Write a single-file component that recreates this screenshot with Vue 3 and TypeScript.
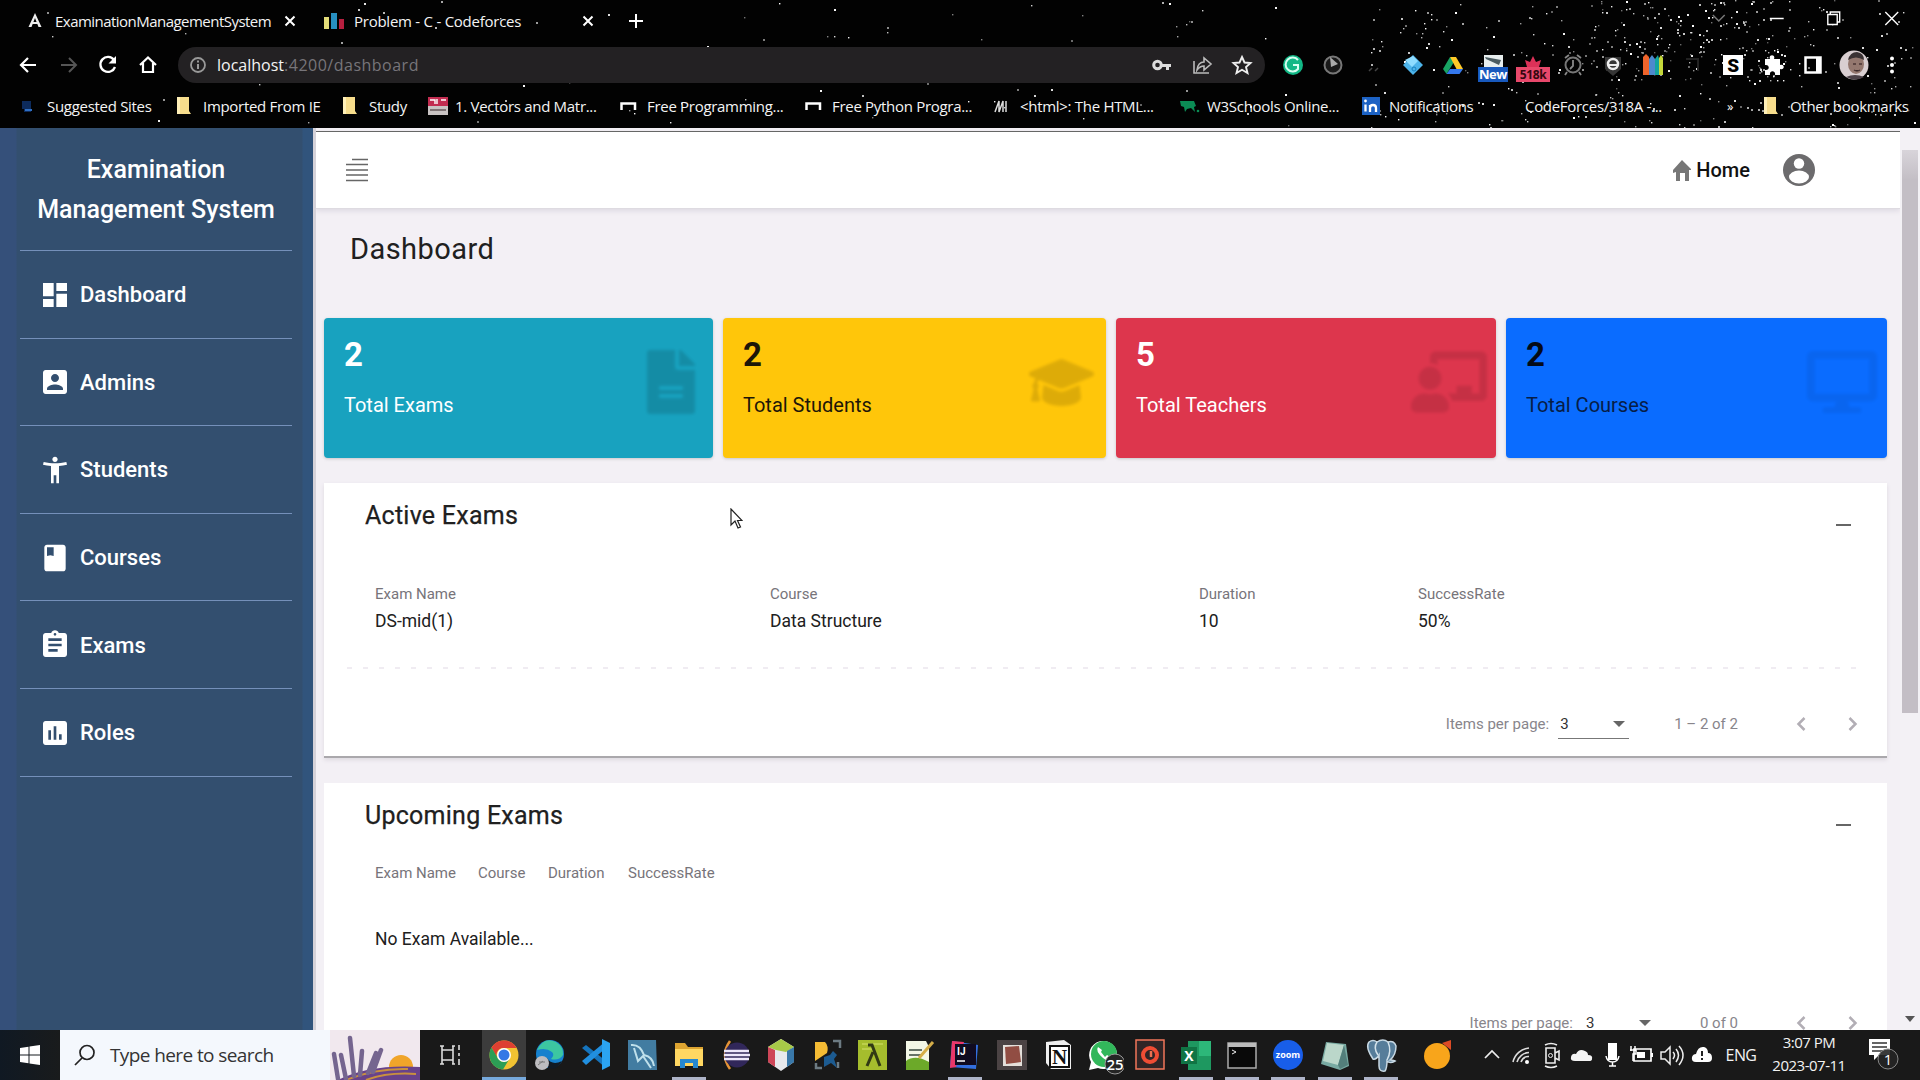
<script setup lang="ts">
interface Star { x: number; y: number; s: number; o: number }
interface Bookmark { label: string; width: number; icon: string }

function random(seed: number): () => number {
  let a = seed
  return () => {
    a = (a * 1664525 + 1013904223) % 4294967296
    return a / 4294967296
  }
}

const rnd = random(77)
const stars: Star[] = []
function scatter(count: number, x0: number, x1: number, y0: number, y1: number): void {
  for (let i = 0; i < count; i++) {
    stars.push({
      x: Math.round(x0 + rnd() * (x1 - x0)),
      y: Math.round(y0 + rnd() * (y1 - y0)),
      s: rnd() > 0.55 ? 2 : 1.4,
      o: 0.35 + rnd() * 0.65,
    })
  }
}
scatter(34, 20, 640, 0, 127)
scatter(60, 640, 1300, 0, 127)
scatter(300, 1370, 1915, 0, 127)
scatter(160, 1590, 1790, 0, 80)

const bookmarks: Bookmark[] = [
  { label: 'Suggested Sites', width: 156, icon: 'site' },
  { label: 'Imported From IE', width: 166, icon: 'folder' },
  { label: 'Study', width: 86, icon: 'folder' },
  { label: '1. Vectors and Matr...', width: 192, icon: 'mit' },
  { label: 'Free Programming...', width: 185, icon: 'bracket' },
  { label: 'Free Python Progra...', width: 188, icon: 'bracket' },
  { label: '<html>: The HTML...', width: 187, icon: 'mdn' },
  { label: 'W3Schools Online...', width: 182, icon: 'w3' },
  { label: 'Notifications', width: 136, icon: 'linkedin' },
  { label: 'CodeForces/318A -...', width: 229, icon: 'none' },
]

const bookmarkIcons: Record<string, string> = {
  none: '',
  site: '<path d="M2 4h9v11H4v-3H2z" fill="#0d2b5c"/><path d="M5 13h7" stroke="#2f6fc4" stroke-width="2"/>',
  folder: '<path d="M1 0h12v14l2 3H1z" fill="#f7dd8c"/><path d="M1 0h3v17H1z" fill="#fff0b8"/>',
  mit: '<path d="M0 0h20v9H0z" fill="#c22c50"/><path d="M2 3h5v4M9 2v5M13 3h5" stroke="#fff" stroke-width="1.4" fill="none"/><path d="M0 9h20v9H0z" fill="#c9c3c3"/><path d="M2 13h16" stroke="#7e7374" stroke-width="2"/>',
  bracket: '<path d="M1.500 13V6.500H15V13" fill="none" stroke="#fff" stroke-width="2.500"/>',
  mdn: '<path d="M2 15 6 4v11L10 4v11M13 4v11" fill="none" stroke="#ddd" stroke-width="1.500"/>',
  w3: '<path d="M0 4h14l2 5-2 1 1 5-4-4-4 1-2 3-1-5-3-1z" fill="#0b8c55"/><circle cx="18" cy="14" r="1.300" fill="#0b8c55"/>',
  linkedin: '<path d="M0 0h18v18H0z" fill="#1c62c4"/><path d="M3.500 7.500v7M8 15V8m0 3c0-4 6-4 6 0v4" stroke="#fff" stroke-width="2.300" fill="none"/><circle cx="3.500" cy="4" r="1.400" fill="#fff"/>',
}

const extensions: string[] = [
  '<circle cx="20" cy="20" r="10" fill="#12b886"/><path d="M25 15a7 7 0 1 0 0 9v-4h-5" fill="none" stroke="#d6fff1" stroke-width="2"/>',
  '<circle cx="20" cy="20" r="8.500" fill="#191919" stroke="#777" stroke-width="2"/><path d="m17 12 8 7-7 3z" fill="#aaa"/>',
  '<path d="M16 26l3-3m3 3 3-3" stroke="#444" stroke-width="1.500"/>',
  '<path d="m20 10 10 10-10 10-10-10z" fill="#4db4ea"/><path d="m12 15 8-4 5 5-6 6z" fill="#8edcff"/><circle cx="21" cy="24" r="2" fill="none" stroke="#1780be"/>',
  '<path d="m17 12-7 12 3.500 5L21 17z" fill="#18a463"/><path d="M17 12h6l7 12h-6.500z" fill="#ffca28"/><path d="M13.500 29 17 24h13l-3.500 5z" fill="#3478ee"/>',
  '<path d="M11 10h19v12H11z" fill="#e7eeee"/><path d="m12 12 16 3-2 5-13-6z" fill="#4a5b60"/><path d="M5 22h30v15H5z" fill="#1859bd"/><text x="20" y="34" text-anchor="middle" font-family="Open Sans, sans-serif" font-size="13" font-weight="700" fill="#fff">New</text>',
  '<path d="M12 15l5 2 3-6 3 6 5-2-2 7H14z" fill="#dc3158"/><path d="M3 22h34v15H3z" fill="#e8486b"/><text x="20" y="34" text-anchor="middle" font-family="Open Sans, sans-serif" font-size="12" font-weight="700" fill="#34070f">518k</text>',
  '<circle cx="20" cy="20" r="7.500" fill="none" stroke="#777" stroke-width="2"/><path d="M20 15v6l-3 3M12 13l4-3m12 3-4-3M14 27l-2 3m14-3 2 3" fill="none" stroke="#888" stroke-width="1.800"/>',
  '<path d="M12 12h16v12l-8 7-8-7z" fill="#363636"/><circle cx="20" cy="19" r="5" fill="none" stroke="#eee" stroke-width="2.500"/><path d="M16 20h8" stroke="#eee" stroke-width="2"/>',
  '<path d="M10 12l3-3 3 3v18h-6z" fill="#ee642b"/><path d="M16 14l3-4 3 4v16h-6z" fill="#4d89cd"/><path d="M22 14l3-4 1 4v16h-4z" fill="#14a49d"/><path d="M26 13l2-3 2 3v17h-4z" fill="#c4d83a"/>',
  '<path d="M13 14h12v12" fill="none" stroke="#222" stroke-width="2"/>',
  '<path d="M10 10h20v20H10z" fill="#fff"/><text x="20" y="27" text-anchor="middle" font-family="Roboto, sans-serif" font-size="19" font-weight="900" fill="#000">S</text>',
  '<path d="M12 14h5c-2-5 6-5 4 0h6v6c5-2 5 6 0 4v6h-5c1-5-6-5-5 0h-5v-5c5 1 5-6 0-5z" fill="#fff"/>',
  '<path d="M12.500 12.500h15v15h-15z" fill="none" stroke="#fff" stroke-width="2.500"/><path d="M23 12h5v16h-5z" fill="#fff"/>',
  '<circle cx="21" cy="20" r="14.500" fill="#d9cfd1"/><ellipse cx="23" cy="19" rx="8" ry="10" fill="#94786f"/><path d="M15 15q2-8 9-8 7 1 7 8-8-5-16 0z" fill="#3a3233"/><path d="M20 19h3m3 0h3M21 25q3 2 6 0" stroke="#493534" stroke-width="1.300"/><path d="M13 32q9-4 18 0-8 5-18 0z" fill="#4b4147"/>',
  '<circle cx="19" cy="13.500" r="2" fill="#fff"/><circle cx="19" cy="20" r="2" fill="#fff"/><circle cx="19" cy="26.500" r="2" fill="#fff"/>',
]

const menu = [
  { label: 'Dashboard', d: 'M3 13h8V3H3v10zm0 8h8v-6H3v6zm10 0h8V11h-8v10zm0-18v6h8V3h-8z' },
  { label: 'Admins', d: 'M3 5v14c0 1.100.890 2 2 2h14c1.100 0 2-.900 2-2V5c0-1.100-.900-2-2-2H5c-1.110 0-2 .900-2 2zm12 4c0 1.660-1.340 3-3 3s-3-1.340-3-3 1.340-3 3-3 3 1.340 3 3zm-9 8c0-2 4-3.100 6-3.100s6 1.100 6 3.100v1H6v-1z' },
  { label: 'Students', d: 'M20.500 6c-2.610.700-5.670 1-8.500 1s-5.890-.300-8.500-1L3 8c1.860.500 4 .830 6 1v13h2v-6h2v6h2V9c2-.170 4.140-.500 6-1l-.500-2zM12 6c1.100 0 2-.900 2-2s-.900-2-2-2-2 .900-2 2 .900 2 2 2z' },
  { label: 'Courses', d: 'M18 2H6c-1.100 0-2 .900-2 2v16c0 1.100.900 2 2 2h12c1.100 0 2-.900 2-2V4c0-1.100-.900-2-2-2zM6 4h5v6.500l-2.500-.500L6 10.500V4z' },
  { label: 'Exams', d: 'M19 3h-4.180C14.400 1.840 13.300 1 12 1c-1.300 0-2.400.840-2.820 2H5c-1.100 0-2 .900-2 2v14c0 1.100.900 2 2 2h14c1.100 0 2-.900 2-2V5c0-1.100-.900-2-2-2zm-7 0c.550 0 1 .450 1 1s-.450 1-1 1-1-.450-1-1 .450-1 1-1zm2 14H7v-2h7v2zm3-4H7v-2h10v2zm0-4H7V7h10v2z' },
  { label: 'Roles', d: 'M19 3H5c-1.100 0-2 .900-2 2v14c0 1.100.900 2 2 2h14c1.100 0 2-.900 2-2V5c0-1.100-.900-2-2-2zM9 17H7v-7h2v7zm4 0h-2V7h2v10zm4 0h-2v-4h2v4z' },
]

const cards = [
  { value: 2, label: 'Total Exams', tone: 'teal', box: '0 0 384 512', w: 48, d: 'M224 136V0H24C11 0 0 11 0 24v464c0 13 11 24 24 24h336c13 0 24-11 24-24V160H248c-13 0-24-11-24-24zm64 236c0 7-5 12-12 12H108c-7 0-12-5-12-12v-8c0-7 5-12 12-12h168c7 0 12 5 12 12v8zm0-64c0 7-5 12-12 12H108c-7 0-12-5-12-12v-8c0-7 5-12 12-12h168c7 0 12 5 12 12v8zM384 122v6H256V0h6c6 0 12 3 17 7l98 98c4 5 7 11 7 17z' },
  { value: 2, label: 'Total Students', tone: 'yellow', box: '0 0 640 512', w: 65, d: 'M622 153 343 37c-15-6-31-6-46 0L18 153c-24 9-24 39 0 48l49 20c-11 13-17 30-18 47-10 6-17 16-17 28 0 11 6 20 14 26L20 430c-2 9 5 18 15 18h58c10 0 17-9 15-18L82 322c8-6 14-15 14-26 0-12-7-21-16-27 1-15 8-23 21-32l196 80c9 3 27 7 46 0l279-116c24-9 24-39 0-48zM353 345c-30 11-57 4-66 0l-145-59-14 123c0 45 86 84 192 84s192-39 192-84l-14-123-145 59z' },
  { value: 5, label: 'Total Teachers', tone: 'red', box: '0 0 640 512', w: 76, d: 'M208 352c-2 0-5 0-7 1a130 130 0 0 1-82 0c-2-1-5-1-7-1C50 352 0 402 0 464c0 27 22 48 48 48h224c26 0 48-21 48-48 0-62-50-112-112-112zm-48-32a96 96 0 1 0 0-192 96 96 0 0 0 0 192zM592 0H208c-26 0-48 22-48 49v47c24 0 45 7 64 18V64h352v288h-64v-64H384v64h-77c20 16 34 39 41 64h244c26 0 48-22 48-49V49c0-27-22-49-48-49z' },
  { value: 2, label: 'Total Courses', tone: 'blue', box: '0 0 576 512', w: 70, d: 'M528 0H48C22 0 0 22 0 48v320c0 27 22 48 48 48h192l-16 48h-72c-13 0-24 11-24 24s11 24 24 24h272c13 0 24-11 24-24s-11-24-24-24h-72l-16-48h192c27 0 48-21 48-48V48c0-26-21-48-48-48zm-16 352H64V64h448v288z' },
]

const taskApps: { icon: string; open?: boolean; focused?: boolean }[] = [
  { focused: true, icon: '<circle cx="20" cy="20" r="14.500" fill="#f1c232"/><path d="M20 5.500A14.500 14.500 0 0 0 7.500 12.500l6 11A7 7 0 0 1 20 13h12.600A14.500 14.500 0 0 0 20 5.500z" fill="#dd4032"/><path d="M7.500 12.500A14.500 14.500 0 0 0 19 34.500l6-10a7 7 0 0 1-11-1z" fill="#2c9e55"/><circle cx="20" cy="20" r="7" fill="#fff"/><circle cx="20" cy="20" r="5.500" fill="#3478e5"/>' },
  { icon: '<circle cx="20" cy="19" r="14" fill="#1681ce"/><path d="M7 15Q14 1 26 7q8 5 7 13-4 6-12 4 4-4 1-7-6-5-15-2z" fill="#3cc6a1"/><path d="M17 23q5 8 15 3-5 10-14 7z" fill="#111a24"/><circle cx="12" cy="28" r="7" fill="#bdbcbf"/><path d="M9 27h6m-7 3 5-4" stroke="#777"/>' },
  { icon: '<path d="m6 13 4-3 20 16v7z" fill="#1574bd"/><path d="m6 26 4 4 20-17V6z" fill="#218fdf"/><path d="m26 4 8 4v23l-8 4z" fill="#2ba4f2"/>' },
  { icon: '<path d="M6 5h28l1 30H6z" fill="#427ca1"/><path d="M9 10q9-1 13 10 9 2 10 11M12 13l4 13 5-5 8 12" fill="none" stroke="#bfe0eb" stroke-width="2"/>' },
  { open: true, icon: '<path d="M6 8h10l3 4h15v19H6z" fill="#dda431"/><path d="M6 14h28v17H6z" fill="#ffd762"/><path d="M11 33V24h18v9h-5v-5h-8v5z" fill="#2688cf"/>' },
  { icon: '<path d="M15 6Q5 20 15 34" fill="none" stroke="#e69437" stroke-width="2.500"/><circle cx="22" cy="20" r="12.500" fill="#31275a"/><path d="M9 16h25M9 20h26M9 24h25" stroke="#eee8fb" stroke-width="2.600"/>' },
  { icon: '<path d="m20 4 13 8v15l-13 9-13-9V12z" fill="#e7e9ed"/><path d="m20 4 13 8-8 5-10-2-8-3z" fill="#a7c948"/><path d="m7 12 7 3v17l-7-5z" fill="#ce4658"/><path d="m33 12-7 4v16l7-5z" fill="#3978a9"/>' },
  { icon: '<path d="M8 7h10q4 4 2 11L8 26z" fill="#f4bb34"/><path d="M26 6h7v7m-2 14v6M9 28v5h6" fill="none" stroke="#6d7b83" stroke-width="2.500"/><path d="m17 22 6-2 3-4 4 4-3 4 3 9-6-5-7 4z" fill="#1c5b91"/>' },
  { icon: '<path d="M5 5h29v30H5z" fill="#a5bd2d"/><path d="M9 9h21M9 14h10" stroke="#d3e16b"/><path d="M15 10h4l8 21M20 17l-6 14" fill="none" stroke="#313a14" stroke-width="3"/>' },
  { icon: '<path d="M7 6h20l3 6v23H7z" fill="#f3f7e6"/><path d="M10 15h13M10 20h12" stroke="#657367" stroke-width="2"/><path d="M7 26q9-7 23 1v8H7z" fill="#6ca929"/><path d="m20 23 14-16" stroke="#d5ae49" stroke-width="3"/>' },
  { open: true, icon: '<path d="m7 6 26 4-2 24-26-2z" fill="#336fe0"/><path d="m7 6 12 1-8 25-6 1z" fill="#ea3769"/><path d="M10 9h21v21H10z" fill="#100b20"/><text x="12" y="20" font-family="Roboto, sans-serif" font-size="10" font-weight="700" fill="#fff">IJ</text><path d="M12 26h8" stroke="#fff" stroke-width="1.500"/>' },
  { icon: '<path d="M5 5h30v30H5z" fill="#4b4344"/><path d="M11 10h19v21H11z" fill="#e4dfda"/><path d="m13 12 14-1 2 16-15 2z" fill="#914d43"/>' },
  { icon: '<path d="m8 7 18-2 7 5v24H13l-5-6z" fill="#eee"/><path d="M12 11h19v21H12z" fill="#fff" stroke="#111" stroke-width="2"/><text x="21.500" y="29" text-anchor="middle" font-family="Liberation Serif, serif" font-size="21" font-weight="700" fill="#111">N</text>' },
  { icon: '<path d="M5 35 7 27a14 14 0 1 1 7 6z" fill="#fff"/><circle cx="20" cy="19" r="13" fill="#32b75b"/><path d="M14 12q-3 4 5 11 7 6 9 0l-5-3-2 2-4-5 1-2z" fill="#fff"/><circle cx="31" cy="29" r="10" fill="#252525" stroke="#999"/><text x="31" y="35" text-anchor="middle" font-family="Open Sans, sans-serif" font-size="15" font-weight="600" fill="#fff">25</text>' },
  { icon: '<path d="M6 5h28v29H6z" fill="#302526" stroke="#f17659" stroke-width="1.500"/><circle cx="20" cy="20" r="7" fill="none" stroke="#ef4d34" stroke-width="4"/><path d="M21 16v6" stroke="#ee7051" stroke-width="2.500"/>' },
  { open: true, icon: '<path d="M12 6h23v29H12z" fill="#1e9860"/><path d="M23 6h12v15H23z" fill="#2db779"/><path d="M5 12h16v17H5z" fill="#107444"/><text x="13" y="26" text-anchor="middle" font-family="Open Sans, sans-serif" font-size="14" font-weight="700" fill="#fff">X</text>' },
  { open: true, icon: '<path d="M6 8h28v25H6z" fill="#090909" stroke="#aaa" stroke-width="1.500"/><path d="M6 8h28v4H6z" fill="#bbb"/><path d="m10 15 4 2-4 2" fill="none" stroke="#eee"/>' },
  { open: true, icon: '<circle cx="20" cy="20" r="15" fill="#185ee9"/><text x="20" y="23" text-anchor="middle" font-family="Open Sans, sans-serif" font-size="9" font-weight="700" fill="#fff">zoom</text>' },
  { open: true, icon: '<path d="m11 7 20 2 3 22-9 4-19-6z" fill="#78aaa2"/><path d="m12 8 17 2-6 20-15-4z" fill="#bbd7ca"/><path d="m23 30 6-20 4 20-8 4z" fill="#537f7b"/>' },
  { open: true, icon: '<path d="M8 7q4-3 8 0 6-4 11 0 6-2 8 4 0 9-6 14 3 0 5 1-5 3-8 0 0 7-2 10-6 1-6-5V20q-3 5-6 4Q4 12 8 7z" fill="#567d9a" stroke="#c7d8e3" stroke-width="1.500"/><path d="M16 7q-4 6 1 13m10-13q4 9-1 18" fill="none" stroke="#d4e3eb" stroke-width="1.500"/>' },
]

const trayIcons: string[] = [
  '<path d="m8 18 7-7 7 7" fill="none" stroke="#eee" stroke-width="1.700"/>',
  '<path d="M6 22A18 18 0 0 1 22 8M10 22A13 13 0 0 1 22 12.500M14 22a8 8 0 0 1 8-5.500" fill="none" stroke="#ddd" stroke-width="1.600"/><circle cx="20" cy="22" r="2" fill="#fff"/>',
  '<path d="M9 8h9v15H9zM18 13l4-2v9l-4-2M8 5q6-3 12 0M8 26q6 3 12 0" fill="none" stroke="#eee" stroke-width="1.600"/><circle cx="13.500" cy="15.500" r="2" fill="none" stroke="#eee"/>',
  '<path d="M8 21q-5 0-4-4 1-4 5-3 3-6 9-3 3 1 3 4 5 0 4 4 0 2-3 2z" fill="#f4f4f4"/>',
  '<path d="M11 3h9v17h-9z" fill="#fff"/><path d="M9 16q1 6 6.500 6t6.500-6M15.500 22v4M12 26h7" fill="none" stroke="#fff" stroke-width="1.500"/>',
  '<path d="M7 9h17v12H7z" fill="none" stroke="#fff" stroke-width="1.700"/><path d="M10 12h8v6h-8zM24 13h2v4h-2z" fill="#fff"/><path d="M4 6v5m4-5v5M3 10h6v4H6v7" fill="none" stroke="#fff" stroke-width="1.500"/>',
  '<path d="M4 12h4l5-5v17l-5-5H4zM16 12q3 3 0 7M19 9q5 6 0 13M22 6q8 9 0 19" fill="none" stroke="#eee" stroke-width="1.500"/>',
  '<path d="M9 22q-5 0-4-5 1-3 4-3Q11 6 17 7q4 1 4 6 4 0 4 5 0 4-4 4z" fill="#fff"/><path d="M15 11v5m0 2v2" stroke="#222" stroke-width="2"/>',
]
</script>

<template>
  <div class="screen">
    <header class="browser">
      <svg class="sky" viewBox="0 0 1920 128">
        <rect v-for="(s, i) in stars" :key="i" :x="s.x" :y="s.y" :width="s.s" :height="s.s" fill="#fff" :opacity="s.o" />
      </svg>

      <div class="tabs">
        <div class="tab first">
          <svg width="16" height="18" viewBox="0 0 16 18"><path d="M8 1 1.500 15h3L8 6l3.500 9h3z" fill="#eee" /><path d="M5 11h6" stroke="#eee" stroke-width="2" /></svg>
          <span>ExaminationManagementSystem</span>
          <svg class="close" width="12" height="12" viewBox="0 0 12 12"><path d="m1.500 1.500 9 9m0-9-9 9" stroke="#fff" stroke-width="2" /></svg>
        </div>
        <div class="tab second">
          <svg width="20" height="18" viewBox="0 0 20 18"><path d="M0 5h5v12H0z" fill="#e3dc78" /><path d="M7 1h6v16H7z" fill="#278fc1" /><path d="M15 7h5v10h-5z" fill="#b61f3f" /></svg>
          <span>Problem - C - Codeforces</span>
          <svg class="close" width="12" height="12" viewBox="0 0 12 12"><path d="m1.500 1.500 9 9m0-9-9 9" stroke="#fff" stroke-width="2" /></svg>
        </div>
        <svg class="plus" width="16" height="16" viewBox="0 0 16 16"><path d="M8 1v14M1 8h14" stroke="#fff" stroke-width="2" /></svg>
        <div class="window-buttons">
          <svg viewBox="0 0 58 36"><path d="m23 15 6 6 6-6" fill="none" stroke="#777" stroke-width="1.500" /></svg>
          <svg viewBox="0 0 58 36"><path d="M22 18.500h14" stroke="#fff" stroke-width="1.500" /></svg>
          <svg viewBox="0 0 58 36"><path d="M23 14.500h9.500v10H23zM25.500 14v-2H35v10h-2" fill="none" stroke="#fff" stroke-width="1.400" /></svg>
          <svg viewBox="0 0 58 36"><path d="m22.500 12 13 13m0-13-13 13" stroke="#fff" stroke-width="1.400" /></svg>
        </div>
      </div>

      <div class="toolbar">
        <div class="nav">
          <svg viewBox="0 0 40 40"><path d="M28 20H13m7-7-7 7 7 7" fill="none" stroke="#fff" stroke-width="2.200" /></svg>
          <svg viewBox="0 0 40 40"><path d="M13 20h14m-6-7 7 7-7 7" fill="none" stroke="#555" stroke-width="2" /></svg>
          <svg viewBox="0 0 40 40"><path d="M26 15a7.500 7.500 0 1 0 1 7" fill="none" stroke="#fff" stroke-width="2.300" /><path d="M28 11v7.500h-7.500z" fill="#fff" /></svg>
          <svg viewBox="0 0 40 40"><path d="m12 20 8-7.500 8 7.500m-13-2v9h10v-9" fill="none" stroke="#fff" stroke-width="2.200" /></svg>
        </div>
        <div class="address">
          <svg class="info" viewBox="0 0 18 18"><circle cx="9" cy="9" r="7" fill="none" stroke="#999" stroke-width="1.800" /><path d="M9 8v5M9 4.500v2" stroke="#999" stroke-width="2" /></svg>
          <span class="url">localhost<i>:4200/dashboard</i></span>
          <svg class="act" viewBox="0 0 40 40"><circle cx="15.500" cy="20" r="3.800" fill="none" stroke="#ddd" stroke-width="3" /><path d="M19 19h10v3h-2v3h-3v-3h-5z" fill="#ddd" /></svg>
          <svg class="act" viewBox="0 0 40 40"><path d="M12 16v12h15M15 25q1-8 7-8v-4l7 6-7 6v-4q-4 0-7 4z" fill="none" stroke="#bbb" stroke-width="1.600" /></svg>
          <svg class="act" viewBox="0 0 40 40"><path d="m20 12 2.500 5.500 6 .500-4.500 4 1.500 6-5.500-3.200-5.500 3.200 1.500-6-4.500-4 6-.500z" fill="none" stroke="#eee" stroke-width="1.900" /></svg>
        </div>
        <div class="extensions">
          <svg v-for="(e, i) in extensions" :key="i" viewBox="0 0 40 40" v-html="e"></svg>
        </div>
      </div>

      <div class="bookmarks">
        <div v-for="b in bookmarks" :key="b.label" class="bookmark" :style="{ width: b.width + 'px' }">
          <svg width="20" height="18" viewBox="0 0 20 18" v-html="bookmarkIcons[b.icon]"></svg>
          <span>{{ b.label }}</span>
        </div>
        <span class="more">»</span>
        <div class="bookmark">
          <svg width="20" height="18" viewBox="0 0 20 18" v-html="bookmarkIcons.folder"></svg>
          <span>Other bookmarks</span>
        </div>
      </div>
    </header>

    <div class="app">
      <aside class="sidebar">
        <h1>Examination<br />Management System</h1>
        <a v-for="m in menu" :key="m.label">
          <svg viewBox="0 0 24 24"><path :d="m.d" /></svg>
          <span>{{ m.label }}</span>
        </a>
      </aside>

      <main>
        <div class="topbar">
          <svg class="burger" viewBox="0 0 24 24"><path d="M7 1.500h16M1 6.500h22M1 12h22M1 17h22M1 22.500h22" stroke="#666" stroke-width="1.700" /></svg>
          <div class="home">
            <svg width="20" height="21" viewBox="0 0 20 21"><path d="M1 10 10 0l9 9v1h-2v11h-4v-8H8v8H4V12l-3 1z" fill="#777" /></svg>
            <span>Home</span>
          </div>
          <svg class="account" viewBox="0 0 34 34"><circle cx="17" cy="17" r="16" fill="#6c6b6d" /><circle cx="17" cy="10.500" r="5.200" fill="#fff" /><ellipse cx="17" cy="24" rx="10" ry="6.500" fill="#fff" /></svg>
        </div>

        <h2>Dashboard</h2>

        <section class="cards">
          <div v-for="c in cards" :key="c.label" class="card" :class="c.tone">
            <div class="figures"><strong>{{ c.value }}</strong><span>{{ c.label }}</span></div>
            <svg :viewBox="c.box" :width="c.w" height="64"><path :d="c.d" /></svg>
          </div>
        </section>

        <section class="panel current">
          <div class="panel-head"><h3>Active Exams</h3><i class="minus"></i></div>
          <div class="row labels wide"><span>Exam Name</span><span>Course</span><span>Duration</span><span>SuccessRate</span></div>
          <div class="row values wide"><span>DS-mid(1)</span><span>Data Structure</span><span>10</span><span>50%</span></div>
          <div class="dashes"></div>
          <div class="paginator">
            <span class="ipp">Items per page:</span>
            <div class="select"><span>3</span><i></i></div>
            <span class="range">1 – 2 of 2</span>
            <svg viewBox="0 0 24 24"><path d="m14.500 6-6 6 6 6" /></svg>
            <svg viewBox="0 0 24 24"><path d="m9.500 6 6 6-6 6" /></svg>
          </div>
        </section>

        <section class="panel upcoming">
          <div class="panel-head"><h3>Upcoming Exams</h3><i class="minus"></i></div>
          <div class="row labels narrow"><span>Exam Name</span><span>Course</span><span>Duration</span><span>SuccessRate</span></div>
          <p class="empty">No Exam Available...</p>
          <div class="paginator">
            <span class="ipp">Items per page:</span>
            <div class="select"><span>3</span><i></i></div>
            <span class="range">0 of 0</span>
            <svg viewBox="0 0 24 24"><path d="m14.500 6-6 6 6 6" /></svg>
            <svg viewBox="0 0 24 24"><path d="m9.500 6 6 6-6 6" /></svg>
          </div>
        </section>
      </main>

      <div class="scrollbar"><div class="thumb"></div><i></i></div>
    </div>

    <footer class="taskbar">
      <div class="start"><svg width="20" height="20" viewBox="0 0 20 20"><path d="m0 3 8.500-1.200v7.700H0zM9.500 1.600 20 0v9.500H9.500zM0 10.500h8.500v7.700L0 17zM9.500 10.500H20V20l-10.500-1.600z" fill="#fff" /></svg></div>
      <div class="search">
        <svg width="22" height="22" viewBox="0 0 22 22"><circle cx="13" cy="8.500" r="7" fill="none" stroke="#222" stroke-width="1.700" /><path d="m8 14-7 7" stroke="#222" stroke-width="1.700" /></svg>
        <span>Type here to search</span>
        <svg class="art" viewBox="0 0 90 50">
          <path d="M0 0h90v50H0z" fill="#f1e8ee" />
          <circle cx="71" cy="37" r="12" fill="#f0a52a" />
          <path d="M8 50Q40 34 90 37v13z" fill="#68428a" />
          <path d="M16 50q30-12 62-11M36 50q22-8 50-6" fill="none" stroke="#c8903f" stroke-width="2" />
          <path d="M8 49 4 24M16 49l-5-24M24 46 20 8M30 45l2-24M38 43l8-20M43 42l8-22" fill="none" stroke="#75658f" stroke-width="4.500" stroke-linecap="round" />
        </svg>
      </div>
      <div class="view"><svg width="22" height="22" viewBox="0 0 22 22"><path d="M3 6h11v10H3zM1 2h4m8 0h3M1 20h4m8 0h3M3 2v4m11-4v4M3 16v4m11-4v4M20 1v5m0 3v3m0 3v6" fill="none" stroke="#ddd" stroke-width="1.600" /></svg></div>
      <div class="apps">
        <div v-for="(t, i) in taskApps" :key="i" class="task" :class="{ open: t.open, focused: t.focused }">
          <svg viewBox="0 0 40 40" v-html="t.icon"></svg>
        </div>
      </div>
      <svg class="weather" viewBox="0 0 40 40"><circle cx="20" cy="21" r="13" fill="#f8a51b" /><path d="m25 8 9-3v10z" fill="#dd4b25" /></svg>
      <div class="tray">
        <svg v-for="(t, i) in trayIcons" :key="i" viewBox="0 0 30 30" v-html="t"></svg>
        <span class="lang">ENG</span>
        <div class="clock"><span>3:07 PM</span><span>2023-07-11</span></div>
        <svg class="notice" viewBox="0 0 34 36"><path d="M2 2h21v16H12l-5 5v-5H2z" fill="#fff" /><path d="M5 6h15M5 10h15M5 14h11" stroke="#333" stroke-width="1.500" /><circle cx="21" cy="22" r="10" fill="#252525" fill-opacity=".9" stroke="#888" /><text x="21" y="27.500" text-anchor="middle" font-family="Open Sans, sans-serif" font-size="15" fill="#fff">1</text></svg>
      </div>
    </footer>

    <svg class="cursor" viewBox="0 0 13 21"><path d="M1 1v16l4-4 3 7 2.500-1-3-6.500H12z" fill="#fff" stroke="#222" stroke-width="1.200" /></svg>
  </div>
</template>

<style>
body { margin: 0; overflow: hidden; }
</style>

<style scoped>
* { box-sizing: border-box; }
.screen { position: relative; width: 1920px; height: 1080px; display: flex; flex-direction: column; overflow: hidden; font-family: Roboto, "Liberation Sans", sans-serif; color: #202020; }
svg { display: block; flex: none; }

.browser { position: relative; height: 128px; background: #020202; color: #f4f4f4; font-family: "Open Sans", "Noto Sans", sans-serif; font-size: 15px; letter-spacing: -0.3px; white-space: nowrap; flex: none; }
.sky { position: absolute; inset: 0; width: 1920px; height: 128px; }
.tabs { position: relative; display: flex; align-items: center; height: 41px; padding-left: 27px; }
.tab { display: flex; align-items: center; }
.tab .close { margin-left: auto; }
.tab.first { width: 269px; }
.tab.first span { margin-left: 12px; letter-spacing: -0.53px; }
.tab.second { width: 270px; margin-left: 28px; }
.tab.second span { margin-left: 10px; letter-spacing: -0.25px; }
.plus { margin-left: 34px; }
.window-buttons { display: flex; height: 36px; margin: 0 0 5px auto; }
.window-buttons svg { width: 57.500px; height: 36px; }
.toolbar { position: relative; display: flex; align-items: center; height: 47px; padding-left: 8px; }
.nav { display: flex; width: 170px; }
.nav svg { width: 40px; height: 40px; }
.address { display: flex; align-items: center; width: 1087px; height: 36px; padding: 0 3px 0 11px; border-radius: 18px; background: #232123; }
.info { width: 18px; height: 18px; }
.url { margin: 0 auto 0 10px; font-size: 16px; letter-spacing: 0; }
.url i { font-style: normal; letter-spacing: 0.5px; color: #77757a; }
.act { width: 40px; height: 40px; }
.extensions { display: flex; margin-left: 8px; }
.extensions svg { width: 40px; height: 40px; overflow: visible; letter-spacing: -0.4px; }
.bookmarks { position: relative; display: flex; align-items: center; height: 35px; padding-left: 20px; }
.bookmark { display: flex; align-items: center; gap: 7px; }
.more { width: 36px; font-size: 13px; }

.app { display: flex; flex: 1; min-height: 0; }
.sidebar { width: 313px; padding: 0 21px 0 20px; background: linear-gradient(90deg, #35507a 0, #35507a 16px, #334f6f 17px, #334f6f 302px, #31547c 303px); color: #fff; flex: none; }
.sidebar h1 { height: 122px; margin: 0 -10px; padding-top: 22px; text-align: center; font-weight: 500; font-size: 25px; line-height: 40px; white-space: nowrap; }
.sidebar a { display: flex; align-items: center; height: 87.600px; padding: 1px 0 0 19px; border-top: 1.500px solid #7590ba; font-weight: 500; font-size: 22px; }
.sidebar a:last-child { height: 89px; border-bottom: 1.500px solid #7590ba; }
.sidebar a svg { width: 32px; height: 32px; fill: #fff; }
.sidebar a span { margin-left: 9px; }

main { position: relative; display: flex; flex-direction: column; width: 1587px; padding: 3px 13px 0 11px; background: #f3f0f5; border-left: 3px solid #d5d2d9; overflow: hidden; flex: none; }
.topbar { display: flex; align-items: center; height: 78px; margin: 0 -13px 0 -11px; padding: 0 84px 0 29px; background: #fff; border-top: 1px solid #666; border-bottom: 1px solid #dedbe1; box-shadow: 0 2px 5px #ddd9e2; flex: none; }
.burger { width: 24px; height: 24px; }
.home { display: flex; align-items: center; gap: 4px; margin-left: auto; font-weight: 500; font-size: 20px; color: #111; }
.account { width: 34px; height: 34px; margin-left: 32px; }
h2 { height: 109px; margin: 0; padding: 20px 0 0 23px; font-weight: 400; font-size: 29px; line-height: 40px; letter-spacing: 0.45px; flex: none; }
.cards { display: flex; gap: 10px; height: 140px; margin-left: -3px; flex: none; }
.card { display: flex; flex: 1; justify-content: space-between; padding: 19px 18px 0 20px; border-radius: 4px; color: #fff; box-shadow: 0 1px 3px #9997; }
.card svg { margin-top: 13px; fill: #000; opacity: .13; filter: blur(1.500px); }
.figures { display: flex; flex-direction: column; }
.figures strong { font-size: 33px; line-height: 36px; }
.figures span { margin-top: 20px; font-size: 20px; line-height: 24px; }
.teal { background: #18a2bf; }
.yellow { padding-right: 12px; background: #ffc60a; color: #1d1608; }
.red { padding-right: 9px; background: #dd364d; }
.blue { padding-right: 10px; background: #0a6cff; color: #071d46; }
.blue strong { color: #050b17; }
.card.red svg { opacity: .1; }
.card.blue svg { opacity: .06; }

.panel { display: flex; flex-direction: column; margin-left: -3px; background: #fff; flex: none; }
.current { height: 275px; margin-top: 25px; border-bottom: 2px solid #aaa8ac; box-shadow: 0 2px 4px #ddd9e0; }
.upcoming { height: 260px; margin-top: 25px; }
.panel-head { display: flex; justify-content: space-between; padding: 15px 36px 0 41px; }
h3 { margin: 0; font-size: 25px; line-height: 36px; font-weight: 400; letter-spacing: 0.25px; -webkit-text-stroke: 0.250px #202020; }
.minus { width: 15px; height: 2px; margin-top: 26px; background: #666; }
.row { display: grid; padding-left: 51px; }
.wide { grid-template-columns: 395px 429px 219px 1fr; }
.narrow { grid-template-columns: 103px 70px 80px 1fr; }
.labels { font-size: 15px; line-height: 20px; color: #77747a; }
.current .labels { margin-top: 50px; }
.values { margin-top: 5px; font-size: 17.500px; line-height: 24px; }
.dashes { height: 2px; margin: 34px 29px 0 23px; background: repeating-linear-gradient(90deg, #f0ecf2 0 5px, transparent 5px 16px); }
.paginator { display: flex; align-items: center; justify-content: flex-end; height: 36px; padding-right: 23px; font-size: 15px; color: #88858b; }
.current .paginator { margin-top: 37px; }
.select { display: flex; align-items: center; justify-content: space-between; width: 71px; height: 30px; margin-left: 9px; padding: 0 4px 0 2px; border-bottom: 1.500px solid #777; color: #333; }
.select i { border: 6px solid transparent; border-top-color: #666; border-bottom: 0; }
.range { margin: 0 52px 0 45px; }
.paginator svg { width: 24px; height: 24px; fill: none; stroke: #b2aeb5; stroke-width: 2.500; }
.paginator svg + svg { margin-left: 26px; }
.upcoming .labels { margin-top: 29px; }
.empty { margin: 44px 0 0 51px; font-size: 17.500px; line-height: 24px; }
.upcoming .paginator { margin-top: 54px; }
.upcoming .select { border: 0; margin-left: 11px; }

.scrollbar { display: flex; flex-direction: column; align-items: center; width: 20px; padding-top: 22px; background: #f3f1f5; }
.thumb { width: 16px; height: 563px; background: linear-gradient(#d8d4da, #c3bec5 30px); }
.scrollbar i { margin-top: auto; margin-bottom: 8px; border: 5px solid transparent; border-top: 6px solid #555; border-bottom: 0; }

.taskbar { display: flex; align-items: center; height: 50px; background: #191919; color: #f3f3f3; font-family: "Open Sans", "Noto Sans", sans-serif; flex: none; }
.start { display: flex; align-items: center; justify-content: center; width: 60px; height: 50px; background: linear-gradient(90deg, #101923, #191b1c); }
.search { display: flex; align-items: center; width: 360px; height: 50px; padding-left: 14px; background: #f4f8fd; color: #333; font-size: 19px; letter-spacing: -0.6px; white-space: nowrap; }
.search span { margin-left: 14px; }
.art { width: 90px; height: 50px; margin-left: auto; }
.view { display: flex; justify-content: center; width: 60px; }
.apps { display: flex; width: 923px; height: 50px; padding-left: 1px; }
.task { display: flex; justify-content: center; width: 46.150px; height: 50px; padding-top: 5px; flex: none; }
.task svg { width: 40px; height: 40px; }
.task.open { background: linear-gradient(#aeb4c8, #aeb4c8) center bottom / 34px 3px no-repeat; }
.task.focused { background: linear-gradient(#76a9dc, #76a9dc) center bottom / 44px 3px no-repeat, linear-gradient(#3c3c3c, #3c3c3c) center / 44px 50px no-repeat; }
.weather { width: 40px; height: 40px; margin-left: 14px; }
.tray { display: flex; align-items: center; margin-left: 20px; white-space: nowrap; }
.tray > svg { width: 30px; height: 30px; }
.lang { width: 48px; font-size: 16px; text-align: center; letter-spacing: -0.6px; }
.clock { display: flex; flex-direction: column; align-items: center; width: 88px; margin-top: -2px; font-size: 15px; line-height: 23px; letter-spacing: -0.5px; }
.tray > svg.notice { width: 34px; height: 36px; margin-left: 14px; }
.cursor { position: absolute; left: 730px; top: 508px; width: 13px; height: 21px; }
</style>
